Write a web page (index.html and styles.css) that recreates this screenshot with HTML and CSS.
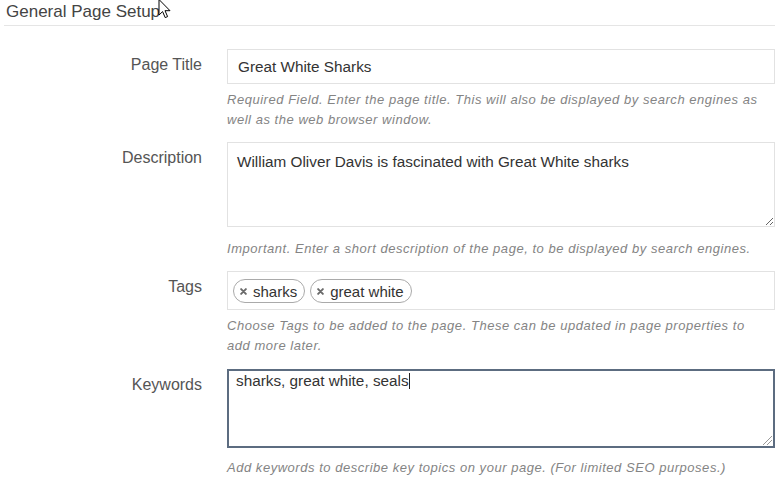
FILE: index.html
```html
<!DOCTYPE html>
<html lang="en">
<head>
<meta charset="utf-8">
<title>General Page Setup</title>
<link rel="stylesheet" href="styles.css">
</head>
<body>
<div class="page">
  <h2 class="title">General Page Setup</h2>
  <div class="form">
    <div class="row row-title">
      <label class="label">Page Title</label>
      <div class="field">
        <input class="input" type="text" value="Great White Sharks">
        <p class="help help-a">Required Field. Enter the page title. This will also be displayed by search engines as well as the web browser window.</p>
      </div>
    </div>
    <div class="row row-desc">
      <label class="label">Description</label>
      <div class="field">
        <textarea class="textarea desc">William Oliver Davis is fascinated with Great White sharks</textarea>
        <p class="help help-b">Important. Enter a short description of the page, to be displayed by search engines.</p>
      </div>
    </div>
    <div class="row row-tags">
      <label class="label">Tags</label>
      <div class="field">
        <div class="tagbox">
          <span class="tag"><svg class="x" viewBox="0 0 8 8" width="8" height="8"><path d="M1.3 1.3 L6.7 6.7 M6.7 1.3 L1.3 6.7" stroke="#6a6a6a" stroke-width="2.2" stroke-linecap="round"/></svg>sharks</span>
          <span class="tag"><svg class="x" viewBox="0 0 8 8" width="8" height="8"><path d="M1.3 1.3 L6.7 6.7 M6.7 1.3 L1.3 6.7" stroke="#6a6a6a" stroke-width="2.2" stroke-linecap="round"/></svg>great white</span>
        </div>
        <p class="help help-a">Choose Tags to be added to the page. These can be updated in page properties to add more later.</p>
      </div>
    </div>
    <div class="row row-kw">
      <label class="label">Keywords</label>
      <div class="field">
        <div class="kwbox">sharks, great white, seals<span class="caret"></span></div>
        <p class="help help-c">Add keywords to describe key topics on your page. (For limited SEO purposes.)</p>
      </div>
    </div>
  </div>
</div>
<svg class="cursor" viewBox="0 0 13 20" width="13" height="20"><path d="M1 0.5 L1 16 L4.6 12.6 L7.2 18.6 L9.6 17.6 L7 11.7 L12 11.7 Z" fill="#fff" stroke="#000" stroke-width="1" stroke-linejoin="miter"/></svg>
</body>
</html>
```
FILE: styles.css
```css
html, body {
  margin: 0;
  padding: 0;
  background: #fff;
}
body {
  font-family: "Liberation Sans", Arial, sans-serif;
  color: #333;
  width: 775px;
  height: 481px;
  overflow: hidden;
  position: relative;
}
.page {
  padding-left: 4px;
}
.title {
  margin: 0;
  padding: 2px 0 3px 2px;
  font-size: 17px;
  line-height: 20px;
  font-weight: normal;
  color: #444;
  border-bottom: 1px solid #e5e5e5;
}
.form {
  margin-top: 23px;
}
.row {
  display: grid;
  grid-template-columns: 198px 548px;
  column-gap: 25px;
}
.row-title { margin-bottom: 13px; }
.row-desc { margin-bottom: 13px; }
.row-tags { margin-bottom: 13.5px; }
.label {
  text-align: right;
  font-size: 16px;
  line-height: 20px;
  padding-top: 6px;
  color: #555;
}
.field {
  display: flex;
  flex-direction: column;
}
.input {
  box-sizing: border-box;
  width: 100%;
  height: 35px;
  margin: 0;
  border: 1px solid #e2e2e2;
  padding: 0 10px;
  font-family: "Liberation Sans", Arial, sans-serif;
  font-size: 15.3px;
  color: #333;
  outline: none;
}
.textarea {
  display: block;
  box-sizing: border-box;
  width: 100%;
  margin: 0;
  border: 1px solid #e2e2e2;
  font-family: "Liberation Sans", Arial, sans-serif;
  font-size: 15.3px;
  line-height: 20px;
  color: #333;
  outline: none;
  resize: vertical;
}
.desc {
  height: 85px;
  padding: 9px 9px;
}
.kwbox {
  box-sizing: border-box;
  width: 100%;
  height: 79px;
  border: 2px solid #5c6c80;
  padding: 0 7px;
  font-size: 15.3px;
  line-height: 20px;
  color: #333;
  position: relative;
}
.kwbox::after {
  content: "";
  position: absolute;
  right: 1px;
  bottom: 1px;
  width: 9px;
  height: 9px;
  background: linear-gradient(135deg, transparent 45%, #999 45%, #999 52%, transparent 52%, transparent 70%, #999 70%, #999 77%, transparent 77%);
}
.caret {
  display: inline-block;
  width: 1px;
  height: 16px;
  background: #222;
  vertical-align: -3px;
}
.tagbox {
  box-sizing: border-box;
  height: 39px;
  border: 1px solid #e2e2e2;
  padding: 7px 5px;
  display: flex;
  gap: 5px;
  align-items: flex-start;
}
.tag {
  box-sizing: border-box;
  height: 24px;
  display: inline-flex;
  align-items: center;
  gap: 6px;
  padding: 0 7px 0 6px;
  border: 1px solid #aaa;
  border-radius: 12px;
  font-size: 15px;
  color: #333;
  background: #fff;
}
.x {
  width: 7px;
  height: 7px;
}
.help {
  margin: 0;
  padding-right: 16px;
  font-style: italic;
  font-size: 13px;
  letter-spacing: 0.53px;
  line-height: 19.5px;
  color: #848484;
}
.help-a { margin-top: 6px; }
.help-b { margin-top: 11.5px; }
.help-c { margin-top: 10.5px; }
.cursor {
  position: absolute;
  left: 158px;
  top: -1px;
}
```
